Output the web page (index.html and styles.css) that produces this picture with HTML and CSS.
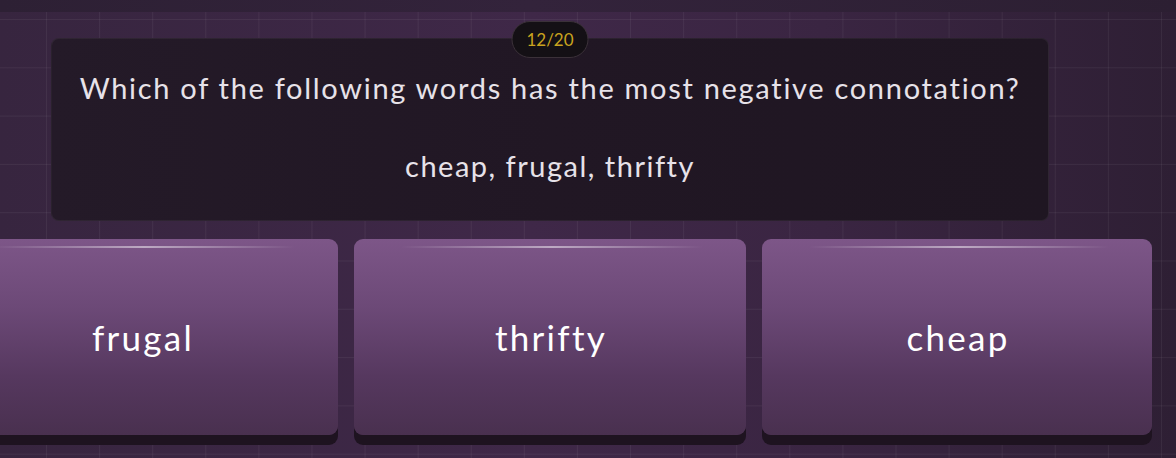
FILE: index.html
```html
<!DOCTYPE html>
<html lang="en">
<head>
<meta charset="utf-8">
<title>Quiz</title>
<link rel="stylesheet" href="styles.css">
</head>
<body>
<div class="topbar"></div>
<main class="stage">
  <section class="question-card">
    <div class="counter">12/20</div>
    <p class="question">Which of the following words has the most negative connotation?</p>
    <p class="words">cheap, frugal, thrifty</p>
  </section>
  <div class="answers">
    <button class="answer">frugal</button>
    <button class="answer">thrifty</button>
    <button class="answer">cheap</button>
  </div>
</main>
</body>
</html>
```
FILE: styles.css
```css
* { box-sizing: border-box; }
html, body { margin: 0; padding: 0; }
body {
  width: 1176px;
  height: 458px;
  overflow: hidden;
  font-family: "Lato", "Noto Sans", sans-serif;
  background: linear-gradient(90deg, #37253f 0%, #3f2848 45%, #3a2542 70%, #2e1f34 100%);
}
.topbar {
  height: 12px;
  background: linear-gradient(90deg, #2d2034 0%, #33233b 45%, #2c1f32 100%);
}
.stage {
  height: 446px;
  padding-top: 26px;
  background-image:
    linear-gradient(to right, rgba(255,255,255,0.055) 1px, transparent 1px),
    linear-gradient(to bottom, rgba(255,255,255,0.055) 1px, transparent 1px);
  background-size: 53.1px 48.3px;
  background-position: 46px 7px;
}
.question-card {
  position: relative;
  margin-left: 51px;
  width: 998px;
  height: 183px;
  border-radius: 8px;
  background: linear-gradient(90deg, #241a28 0%, #211724 50%, #1f1622 100%);
  border: 1px solid rgba(255,255,255,0.05);
  display: flex;
  flex-direction: column;
  align-items: center;
  padding-top: 31px;
  color: #e7e2e9;
}
.counter {
  position: absolute;
  top: -18px;
  left: 50%;
  transform: translateX(-50%);
  width: 77px;
  height: 37px;
  border-radius: 19px;
  background: #141015;
  border: 1px solid #3b3139;
  color: #c9a31f;
  font-size: 17px;
  display: flex;
  align-items: center;
  justify-content: center;
}
.question {
  margin: 0;
  font-size: 29px;
  line-height: 36px;
  letter-spacing: 1.7px;
}
.words {
  margin: 42px 0 0;
  font-size: 29px;
  line-height: 36px;
  letter-spacing: 1.5px;
}
.answers {
  margin-top: 18px;
  margin-left: -54px;
  display: grid;
  grid-template-columns: 392px 392px 390px;
  gap: 16px;
}
.answer {
  position: relative;
  height: 196px;
  border: none;
  border-radius: 9px;
  background: linear-gradient(180deg, #7d5688 0%, #6c4977 35%, #56385f 70%, #49304f 100%);
  box-shadow: 0 10px 0 #1e1320;
  color: #ffffff;
  font-family: inherit;
  font-size: 35px;
  letter-spacing: 2.3px;
  display: flex;
  align-items: center;
  justify-content: center;
  padding: 0 0 0 2px;
}
.answer::before {
  content: "";
  position: absolute;
  top: 7px;
  left: 12%;
  right: 11%;
  height: 2px;
  background: linear-gradient(90deg, rgba(255,255,255,0), rgba(255,255,255,0.5) 50%, rgba(255,255,255,0));
}
```
